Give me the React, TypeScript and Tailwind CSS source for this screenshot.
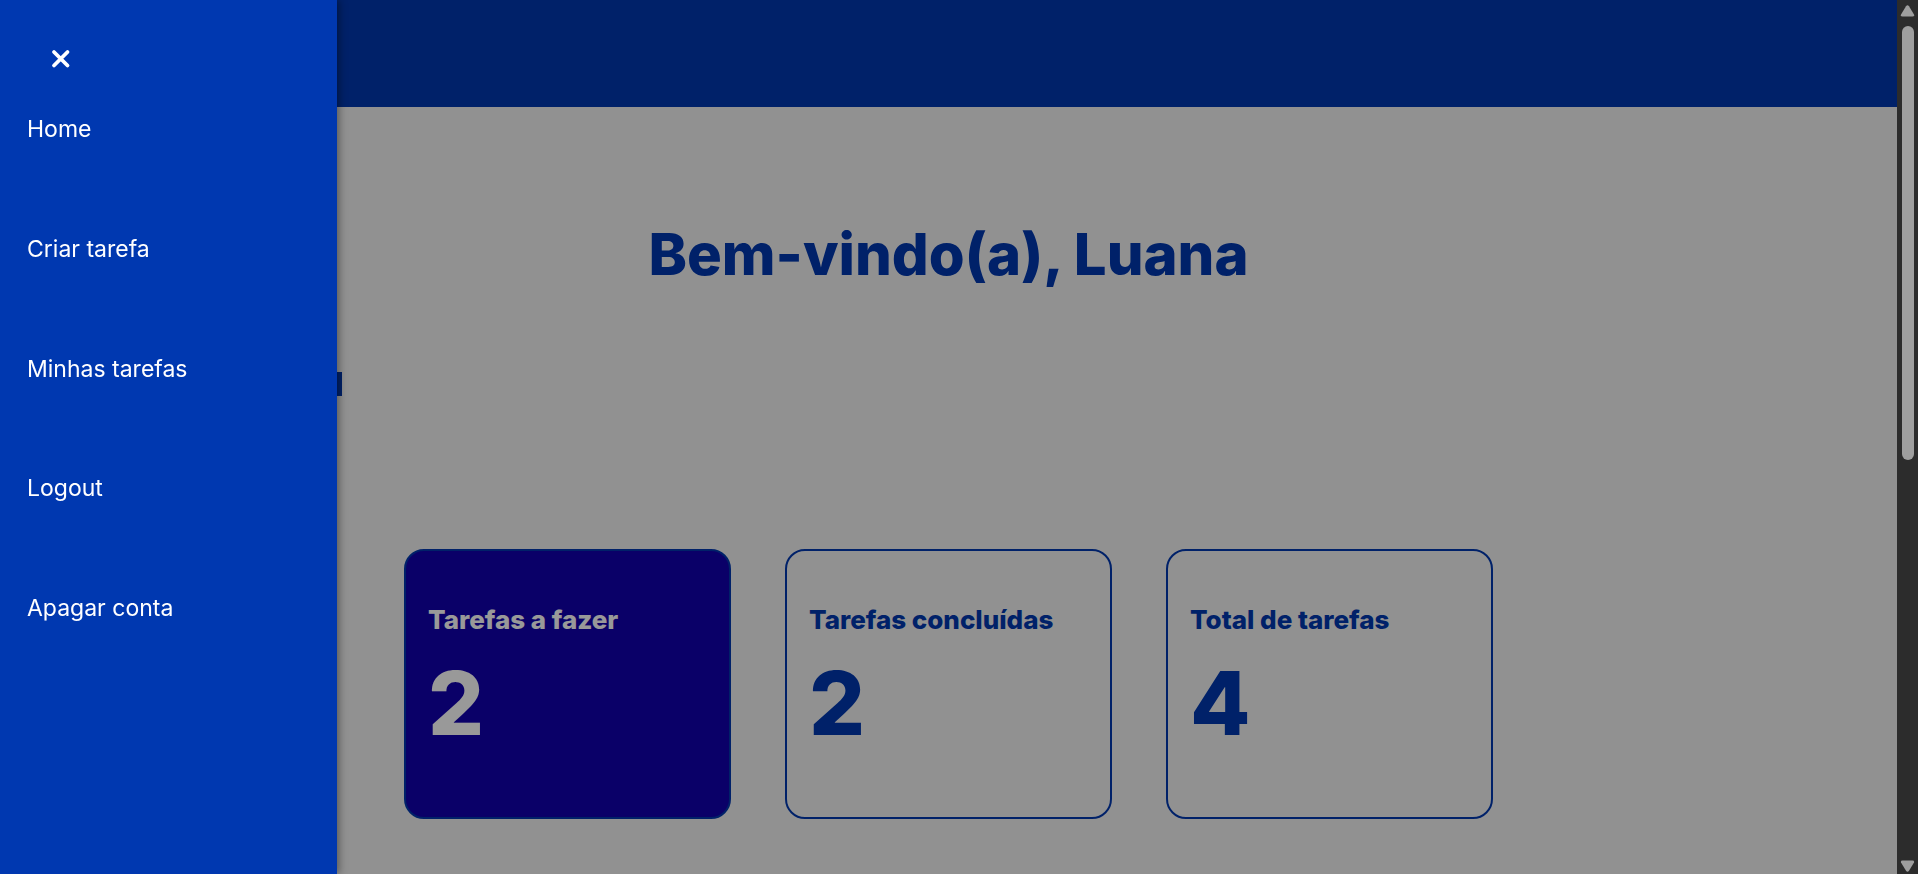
const links = ["Home", "Criar tarefa", "Minhas tarefas", "Logout", "Apagar conta"];

const stats = [
  { label: "Tarefas a fazer", value: 2, active: true },
  { label: "Tarefas concluídas", value: 2, active: false },
  { label: "Total de tarefas", value: 4, active: false },
];

function StatCard({ label, value, active }: { label: string; value: number; active: boolean }) {
  return (
    <article
      className={`h-[270px] flex-1 rounded-[20px] border-2 border-[#0038b0] px-[22px] pt-12 ${
        active ? "bg-[#1200ad] text-white" : "text-[#0038b0]"
      }`}
    >
      <h2 className="text-[26px] leading-[42px] font-extrabold whitespace-nowrap">{label}</h2>
      <p className="text-[88px] leading-[124px] font-extrabold">{value}</p>
    </article>
  );
}

function Sidebar() {
  return (
    <aside className="fixed inset-y-0 left-0 z-20 w-[337px] bg-[#0038b0] text-white shadow-[2px_0_8px_rgba(0,0,0,0.4)]">
      <button type="button" aria-label="Fechar menu" className="mt-[42px] ml-[44px] flex h-8 w-8 items-center justify-center">
        <svg viewBox="0 0 32 32" className="h-8 w-8" fill="none" stroke="currentColor" strokeWidth="3.8" strokeLinecap="round">
          <path d="M10 10 23.500 23.500M23.500 10 10 23.500" />
        </svg>
      </button>
      <nav className="mt-[39px] flex h-[511px] flex-col items-start justify-between pl-[27px]">
        {links.map((link) => (
          <a key={link} href="#" className="text-[23px] leading-8">
            {link}
          </a>
        ))}
      </nav>
    </aside>
  );
}

function Scrollbar() {
  return (
    <div aria-hidden="true" className="flex w-[21px] shrink-0 flex-col items-center bg-[#2c2c2c] pt-[5px] pb-[2px]">
      <svg width="15" height="12" viewBox="0 0 15 12" fill="#9f9f9f">
        <path d="M6 1.2Q7.500-.6 9 1.200L14 9.500Q14.600 11.500 12.500 11.500H2.500Q.4 11.500 1 9.500Z" />
      </svg>
      <div className="flex w-full flex-1 flex-col items-center pt-[9px]">
        <div className="h-[52%] w-3 rounded-full bg-[#9f9f9f]" />
      </div>
      <svg width="15" height="12" viewBox="0 0 15 12" fill="#9f9f9f">
        <path d="M6 10.800Q7.500 12.600 9 10.800L14 2.500Q14.600.5 12.500.5H2.500Q.4.5 1 2.500Z" />
      </svg>
    </div>
  );
}

export default function App() {
  return (
    <div className="flex h-screen overflow-hidden bg-[#f2f2f2] font-['Inter','Noto_Sans',sans-serif]">
      <div className="relative min-w-0 flex-1">
        <header className="h-[107px] bg-[#0038b0]" />
        <main>
          <h1 className="pt-[107px] text-center text-[58px] leading-[80px] font-extrabold text-[#0038b0]">Bem-vindo(a), Luana</h1>
          <div className="mt-[78px] h-6 w-[342px] bg-[#0038b0]" />
          <section className="mx-auto mt-[153px] flex max-w-[1089px] gap-[54px]">
            {stats.map((stat) => (
              <StatCard key={stat.label} {...stat} />
            ))}
          </section>
        </main>
        <div className="absolute inset-0 z-10 bg-black/40" />
      </div>
      <Sidebar />
      <Scrollbar />
    </div>
  );
}
